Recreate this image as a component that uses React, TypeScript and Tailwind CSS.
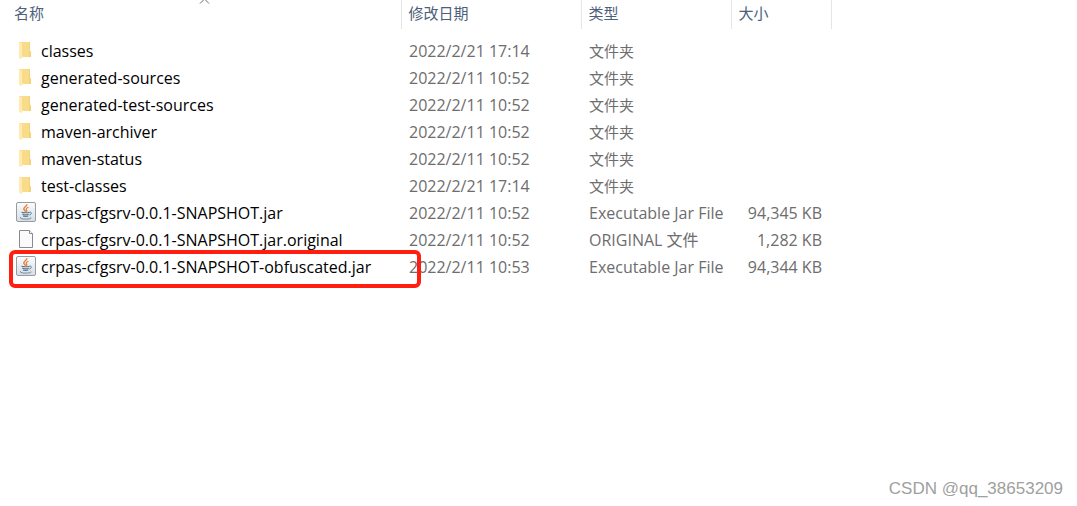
type FileKind = 'folder' | 'jar' | 'blank';

interface FileEntry {
  name: string;
  kind: FileKind;
  modified: string;
  type: string;
  size?: string;
  highlighted?: boolean;
}

const files: FileEntry[] = [
  { name: 'classes', kind: 'folder', modified: '2022/2/21 17:14', type: '文件夹' },
  { name: 'generated-sources', kind: 'folder', modified: '2022/2/11 10:52', type: '文件夹' },
  { name: 'generated-test-sources', kind: 'folder', modified: '2022/2/11 10:52', type: '文件夹' },
  { name: 'maven-archiver', kind: 'folder', modified: '2022/2/11 10:52', type: '文件夹' },
  { name: 'maven-status', kind: 'folder', modified: '2022/2/11 10:52', type: '文件夹' },
  { name: 'test-classes', kind: 'folder', modified: '2022/2/21 17:14', type: '文件夹' },
  { name: 'crpas-cfgsrv-0.0.1-SNAPSHOT.jar', kind: 'jar', modified: '2022/2/11 10:52', type: 'Executable Jar File', size: '94,345 KB' },
  { name: 'crpas-cfgsrv-0.0.1-SNAPSHOT.jar.original', kind: 'blank', modified: '2022/2/11 10:52', type: 'ORIGINAL 文件', size: '1,282 KB' },
  { name: 'crpas-cfgsrv-0.0.1-SNAPSHOT-obfuscated.jar', kind: 'jar', modified: '2022/2/11 10:53', type: 'Executable Jar File', size: '94,344 KB', highlighted: true },
];

function FolderIcon() {
  return (
    <svg width="20" height="20" viewBox="0 0 20 20" aria-hidden="true">
      <path d="M3 2h11v9l1 1v5H4z" fill="#f9dc8a" />
      <path d="M13 2h1v9l1 1v5h-2z" fill="#f5d276" />
      <path d="M3 2l4 2v12l-1 3-3-1z" fill="#ffebb0" />
      <path d="M6.500 4v12" stroke="#f3d27c" strokeWidth="0.7" />
    </svg>
  );
}

function JarIcon() {
  return (
    <svg width="20" height="20" viewBox="0 0 20 20" fill="none" aria-hidden="true">
      <defs>
        <linearGradient id="jar" x1="0" y1="0" x2="0" y2="1">
          <stop offset="0" stopColor="#fbfcfd" />
          <stop offset="1" stopColor="#d5dde4" />
        </linearGradient>
      </defs>
      <rect x="0.5" y="0.5" width="19" height="19" rx="1.500" fill="url(#jar)" stroke="#969ca2" />
      <path d="M10.800 2.200c.6 2-3.600 3-3 5 .2 1 1.500 1.600 1.800 2.500" stroke="#e8792b" strokeWidth="1.400" />
      <path d="M12.500 5.200c-2 .8-3 1.700-1.900 2.900.6.7.2 1.400-.4 1.800" stroke="#e8792b" strokeWidth="1.100" />
      <path d="M5.500 10.300c1.500.7 6.500.7 8-.1M6.300 12.300c1.700.6 4.900.6 6.400 0M7 14.100c1.500.5 3.900.5 5.300 0" stroke="#55758f" strokeWidth="1.100" />
      <path d="M13.500 10.200c2.600-.5 2.300 2.200-.2 2.900" stroke="#55758f" />
      <path d="M5 15.100c-2.200 1.400 1 2 4.800 2 3.500 0 6.400-.6 5-1.600" stroke="#6f8ca3" />
    </svg>
  );
}

function BlankFileIcon() {
  return (
    <svg width="20" height="20" viewBox="0 0 20 20" aria-hidden="true">
      <path d="M3.500 1.500h10l3 3v14h-13z" fill="#fafafa" stroke="#8a8a8a" />
      <path d="M13.500 1.500v3h3" fill="#fff" stroke="#8a8a8a" />
    </svg>
  );
}

function FileIcon({ kind }: { kind: FileKind }) {
  if (kind === 'folder') return <FolderIcon />;
  if (kind === 'jar') return <JarIcon />;
  return <BlankFileIcon />;
}

function FileRow({ file }: { file: FileEntry }) {
  return (
    <tr className="h-[27px] text-[#6d6d6d]">
      <td className="relative p-0 pl-4 text-black">
        <div className="flex items-center gap-[5px]">
          <div className="pb-1">
            <FileIcon kind={file.kind} />
          </div>
          <span>{file.name}</span>
        </div>
        {file.highlighted && (
          <div className="pointer-events-none absolute -top-1 -right-5 -bottom-[7px] left-[9px] z-10 rounded-md border-4 border-[#ff1e10]" />
        )}
      </td>
      <td className="p-0 pl-2">{file.modified}</td>
      <td className={file.kind === 'folder' ? 'p-0 pl-2 text-[15px]' : 'p-0 pl-2'}>{file.type}</td>
      <td className="p-0 pr-[9px] text-right">{file.size}</td>
      <td className="p-0" />
    </tr>
  );
}

export default function App() {
  return (
    <main className="relative min-h-screen overflow-hidden bg-white font-['Open_Sans','Noto_Sans_CJK_SC',sans-serif] text-[16px] leading-[27px]">
      <table className="w-full table-fixed border-collapse whitespace-nowrap">
        <colgroup>
          <col className="w-[401px]" />
          <col className="w-[180px]" />
          <col className="w-[150px]" />
          <col className="w-[100px]" />
          <col />
        </colgroup>
        <thead>
          <tr className="h-[29px] text-left text-[15px] text-[#4c607a]">
            <th className="relative p-0 pb-0.5 pl-[14px] font-normal" aria-sort="ascending">
              名称
              <svg className="absolute top-0 left-[199px]" width="11" height="4" viewBox="0 0 11 4" fill="none" aria-hidden="true">
                <path d="M1 3.500l4.500-4.500 4.500 4.500" stroke="#6b6b6b" />
              </svg>
            </th>
            <th className="border-l border-[#e5e5e5] p-0 pb-0.5 pl-[7px] font-normal">修改日期</th>
            <th className="border-l border-[#e5e5e5] p-0 pb-0.5 pl-[7px] font-normal">类型</th>
            <th className="border-x border-[#e5e5e5] p-0 pb-0.5 pl-[7px] font-normal">大小</th>
            <td className="p-0" />
          </tr>
        </thead>
        <tbody>
          <tr className="h-[9px]" aria-hidden="true">
            <td className="p-0" colSpan={5} />
          </tr>
          {files.map((file) => (
            <FileRow key={file.name} file={file} />
          ))}
        </tbody>
      </table>

      <div className="absolute right-[14px] bottom-1 font-['Liberation_Sans',Arial,sans-serif] text-[17px] text-[#a0a0a0]">
        CSDN @qq_38653209
      </div>
    </main>
  );
}
